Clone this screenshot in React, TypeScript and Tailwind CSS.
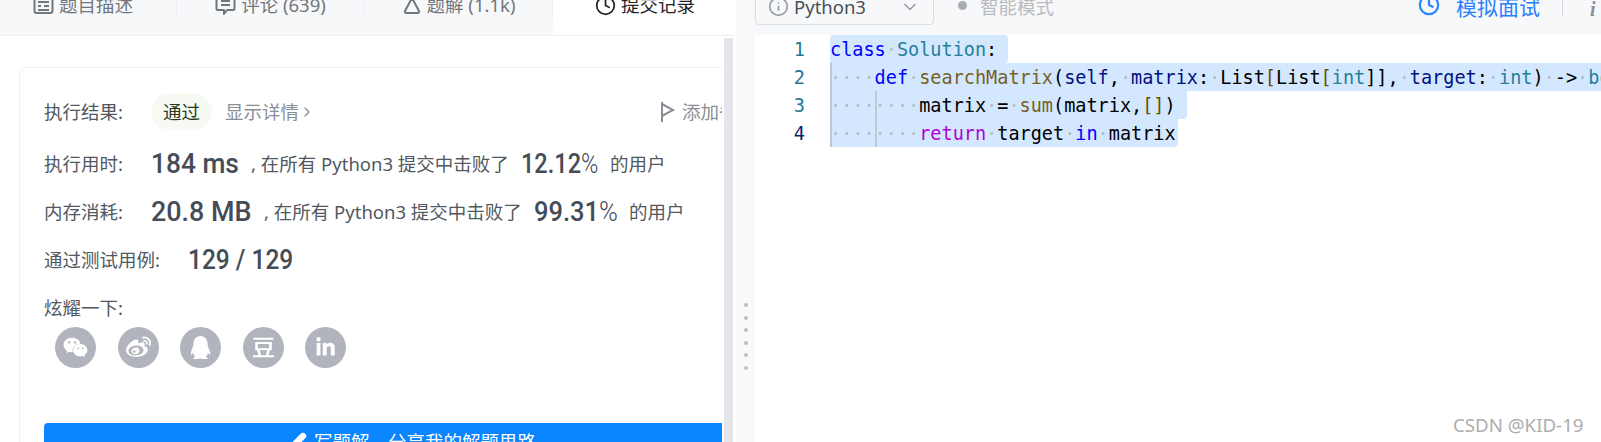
import React from 'react';
import { ChevronDown, ChevronRight, Clock, Info, Pencil } from 'lucide-react';
import { FaWeixin, FaWeibo, FaQq, FaLinkedinIn } from 'react-icons/fa';
import { SiDouban } from 'react-icons/si';

const KW = '#0000ff';
const TYPE = '#267f99';
const FN = '#795e26';
const VAR = '#001080';
const BLK = '#000000';
const CTRL = '#af00db';
const DOT = '#b4bcc6';

type Token = [string, string];

const CODE: { tokens: Token[]; cls: string; num: string }[] = [
  {
    num: 'text-[#237893]',
    cls: 'pr-[11px] rounded-t-[4px] rounded-br-[4px]',
    tokens: [['class', KW], ['·', DOT], ['Solution', TYPE], [':', BLK]],
  },
  {
    num: 'text-[#237893]',
    cls: 'pr-[600px]',
    tokens: [
      ['····', DOT], ['def', KW], ['·', DOT], ['searchMatrix', FN], ['(', BLK], ['self', VAR], [',', BLK], ['·', DOT],
      ['matrix', VAR], [':', BLK], ['·', DOT], ['List', BLK], ['[', '#6b4e00'], ['List', BLK], ['[', '#6b4e00'], ['int', TYPE],
      [']]', BLK], [',', BLK], ['·', DOT], ['target', VAR], [':', BLK], ['·', DOT], ['int', TYPE], [')', BLK], ['·', DOT],
      ['->', BLK], ['·', DOT], ['bool', TYPE], [':', BLK],
    ],
  },
  {
    num: 'text-[#237893]',
    cls: 'pr-[11px] rounded-br-[4px]',
    tokens: [
      ['········', DOT], ['matrix', BLK], ['·', DOT], ['=', BLK], ['·', DOT], ['sum', FN], ['(', BLK], ['matrix', BLK],
      [',', BLK], ['[', '#6b4e00'], [']', '#6b4e00'], [')', BLK],
    ],
  },
  {
    num: 'text-[#0b216f]',
    cls: 'pr-[2px] rounded-b-[4px]',
    tokens: [
      ['········', DOT], ['return', CTRL], ['·', DOT], ['target', BLK], ['·', DOT], ['in', KW], ['·', DOT], ['matrix', BLK],
    ],
  },
];

function Tab({ width, active, inner, children }: { width: string; active?: boolean; inner?: string; children: React.ReactNode }) {
  return (
    <div className={`${width} h-full ${active ? 'bg-white text-[#1f2329] h-[37px]' : 'text-[#72767c]'}`}>
      <div className={`-mt-[7px] h-[24px] flex items-center justify-center gap-[5px] ${active ? '' : 'border-r border-[#eceef1]'} ${inner ?? ''}`}>
        {children}
      </div>
    </div>
  );
}

// DIN style figures: Roboto squeezed to the width the reference has
function Figure({ box, squeeze, children }: { box: string; squeeze: string; children: React.ReactNode }) {
  return (
    <span className={`${box} shrink-0 inline-block`}>
      <span className={`inline-block origin-left ${squeeze} font-['Roboto'] font-medium text-[28px] text-[#454c56] whitespace-pre`}>
        {children}
      </span>
    </span>
  );
}

function StatRow({ label, value, pct, valueBox, valueSqueeze, pctBox, pctSqueeze }: {
  label: string;
  value: string;
  pct: string;
  valueBox: string;
  valueSqueeze: string;
  pctBox: string;
  pctSqueeze: string;
}) {
  return (
    <div className="h-[48px] flex items-center whitespace-nowrap">
      <span className="w-[107px]">{label}</span>
      <Figure box={valueBox} squeeze={valueSqueeze}>{value}</Figure>
      <span className="w-[270px] shrink-0">, 在所有 Python3 提交中击败了</span>
      <Figure box={pctBox} squeeze={pctSqueeze}>
        {pct}<span className="font-light">%</span>
      </Figure>
      <span>的用户</span>
    </div>
  );
}

function Share({ children }: { children: React.ReactNode }) {
  return (
    <div className="w-[41px] h-[41px] rounded-full bg-[#b1b4bd] flex items-center justify-center text-white">
      {children}
    </div>
  );
}

export default function App() {
  return (
    <div className="relative w-[1601px] h-[442px] overflow-hidden flex bg-white font-['Noto_Sans','Noto_Sans_CJK_SC',sans-serif] text-[18.5px] text-[#525860]">
      {/* left panel */}
      <div className="w-[737px] shrink-0 flex flex-col">
        <div className="h-[36px] shrink-0 flex bg-[#f7f8fa] border-b border-[#eff0f2]">
          <Tab width="w-[177px]" inner="pr-[10px]">
            <svg width="21" height="20" viewBox="0 0 21 20" fill="none" stroke="currentColor" strokeWidth="2">
              <rect x="1.5" y="2" width="18" height="16" rx="2" />
              <path d="M5 7h11M5 11h3M11 11h5M5 15h11" />
            </svg>
            <span>题目描述</span>
          </Tab>
          <Tab width="w-[188px]">
            <svg width="21" height="22" viewBox="0 0 21 22" fill="none" stroke="currentColor" strokeWidth="2" strokeLinejoin="round">
              <path d="M3 2h15a1.5 1.5 0 0 1 1.5 1.5v11a1.5 1.5 0 0 1-1.5 1.5h-6l-3 4v-4H3a1.5 1.5 0 0 1-1.5-1.5v-11A1.5 1.5 0 0 1 3 2z" />
              <path d="M6 7h9M6 11h9" />
            </svg>
            <span>评论 (639)</span>
          </Tab>
          <Tab width="w-[188px]">
            <svg width="20" height="20" viewBox="0 0 20 20" fill="none" stroke="currentColor" strokeWidth="2" strokeLinejoin="round">
              <path d="M10 3 L17 16 Q17.5 18 15.5 18 L4.5 18 Q2.5 18 3 16 Z" />
            </svg>
            <span>题解 (1.1k)</span>
          </Tab>
          <Tab width="w-[184px]" active>
            <Clock size={21} strokeWidth={2} />
            <span>提交记录</span>
          </Tab>
        </div>
        <div className="flex-1 flex min-h-0">
          <div className="w-[722px] overflow-hidden">
            <div className="ml-[19px] mt-[31px] w-[786px] pl-[24px] pr-[25px] pt-[25px] border border-[#f0f0f0] rounded-[8px]">
              <div className="h-[37px] flex items-center whitespace-nowrap">
                <span className="w-[107px]">执行结果:</span>
                <span className="w-[61px] h-[37px] rounded-full bg-[#f6faf3] flex items-center justify-center text-[#2b3a1e]">通过</span>
                <span className="ml-[13px] text-[#8a8f96]">显示详情</span>
                <ChevronRight size={16} className="text-[#8a8f96]" />
                <svg width="16" height="22" viewBox="0 0 16 22" fill="none" stroke="#8a8f96" strokeWidth="2" className="ml-[345px]">
                  <path d="M2 1v20M2 3l11 6-11 6" />
                </svg>
                <span className="ml-[6px] text-[#8a8f96]">添加备注</span>
              </div>
              <div className="h-[10px]" />
              <StatRow label="执行用时:" value="184 ms" pct="12.12" valueBox="w-[100px]" valueSqueeze="scale-x-[.94]" pctBox="w-[89px]" pctSqueeze="scale-x-[.84]" />
              <StatRow label="内存消耗:" value="20.8 MB" pct="99.31" valueBox="w-[113px]" valueSqueeze="scale-x-[.96]" pctBox="w-[95px]" pctSqueeze="scale-x-[.91]" />
              <div className="h-[48px] flex items-center whitespace-nowrap">
                <span className="w-[144px]">通过测试用例:</span>
                <Figure box="w-[104px]" squeeze="scale-x-[.875]">129 / 129</Figure>
              </div>
              <div className="mt-[12px] h-[24px] flex items-center">炫耀一下:</div>
              <div className="mt-[7px] ml-[11px] flex gap-[21.5px]">
                <Share><FaWeixin size={25} /></Share>
                <Share><FaWeibo size={25} /></Share>
                <Share><FaQq size={23} /></Share>
                <Share><SiDouban size={21} /></Share>
                <Share><FaLinkedinIn size={21} /></Share>
              </div>
              <div className="mt-[55px] h-[50px] rounded-[4px] bg-[#0a84ff] text-white flex items-center justify-center gap-[7px] pb-[12px]">
                <Pencil size={20} fill="white" />
                <span>写题解，分享我的解题思路</span>
              </div>
            </div>
          </div>
          <div className="ml-[2px] mt-[2px] w-[9px] bg-[#e5e6eb]" />
        </div>
      </div>

      {/* splitter */}
      <div className="w-[17px] shrink-0 bg-[#fafafc] border-x border-[#f2f3f5] flex flex-col items-center pt-[303px] gap-[8.5px]">
        {[0, 1, 2, 3, 4, 5].map((i) => (
          <div key={i} className="w-[4px] h-[4px] rounded-full bg-[#bdbfc5]" />
        ))}
      </div>

      {/* editor */}
      <div className="flex-1 min-w-0 flex flex-col">
        <div className="h-[35px] shrink-0 bg-[#f7f8fa] flex items-start whitespace-nowrap">
          <div className="ml-[1px] -mt-[12px] w-[179px] h-[37px] border border-[#d9dce0] rounded-[4px] flex items-center text-[#4a4f55]">
            <Info size={21} className="ml-[12px] text-[#9a9ea5]" />
            <span className="ml-[5px]">Python3</span>
            <ChevronDown size={20} className="ml-[34px] text-[#9a9ea5]" />
          </div>
          <div className="ml-[24px] mt-[1px] w-[9px] h-[9px] rounded-full bg-[#a9adb3]" />
          <span className="ml-[13px] -mt-[7px] text-[#b8bbc0]">智能模式</span>
          <Clock size={22} strokeWidth={2.4} className="ml-[364px] -mt-[6px] text-[#2a85ff]" />
          <span className="ml-[16px] -mt-[8px] text-[21px] text-[#2a7fff]">模拟面试</span>
          <div className="ml-[22px] w-px h-[16px] bg-[#d5d7db]" />
          <span className="ml-[27px] -mt-[6px] font-['Liberation_Serif'] italic font-bold text-[20px] text-[#8c8f94]">i</span>
        </div>
        <div className="relative flex-1 overflow-hidden font-['DejaVu_Sans_Mono',monospace] text-[18.52px]">
          {CODE.map((line, i) => (
            <div key={i} className="h-[28px] flex leading-[30px] whitespace-pre">
              <div className={`w-[76px] shrink-0 pr-[25px] text-right ${line.num}`}>{i + 1}</div>
              <div className={`bg-[#d3e7ff] ${line.cls}`}>
                {line.tokens.map(([text, color], j) => (
                  <span key={j} style={{ color }}>{text}</span>
                ))}
              </div>
            </div>
          ))}
          {/* indent guides */}
          <div className="absolute left-[76px] top-[28px] w-[2px] h-[84px] bg-[#bcc8d6]" />
          <div className="absolute left-[121px] top-[56px] w-[2px] h-[56px] bg-[#bcc8d6]" />
        </div>
      </div>

      <span className="absolute left-[1453px] top-[411px] font-['Noto_Sans'] text-[18.7px] text-[#adadad]">CSDN @KID-19</span>
    </div>
  );
}
